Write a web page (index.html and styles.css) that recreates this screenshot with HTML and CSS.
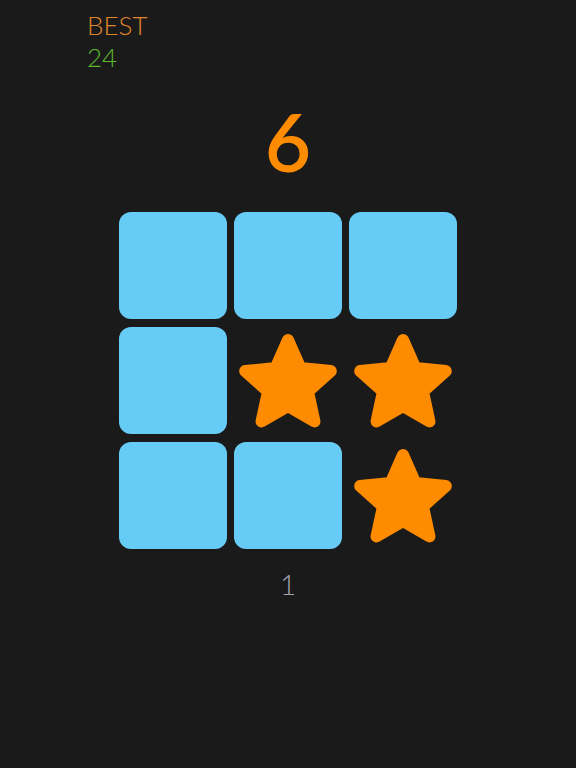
FILE: index.html
```html
<!DOCTYPE html>
<html>
<head>
<meta charset="utf-8">
<link rel="stylesheet" href="styles.css">
</head>
<body>
<div class="page">
  <div class="best">
    <div class="best-label">BEST</div>
    <div class="best-value">24</div>
  </div>
  <div class="score">6</div>
  <div class="grid">
    <div class="tile"></div>
    <div class="tile"></div>
    <div class="tile"></div>
    <div class="tile"></div>
    <div class="cell"><svg class="star" viewBox="0 0 108 107"><polygon points="54,13 66.34,41.01 96.8,44.09 73.97,64.49 80.45,94.41 54,79 27.55,94.41 34.03,64.49 11.2,44.09 41.66,41.01"/></svg></div>
    <div class="cell"><svg class="star" viewBox="0 0 108 107"><polygon points="54,13 66.34,41.01 96.8,44.09 73.97,64.49 80.45,94.41 54,79 27.55,94.41 34.03,64.49 11.2,44.09 41.66,41.01"/></svg></div>
    <div class="tile"></div>
    <div class="tile"></div>
    <div class="cell"><svg class="star" viewBox="0 0 108 107"><polygon points="54,13 66.34,41.01 96.8,44.09 73.97,64.49 80.45,94.41 54,79 27.55,94.41 34.03,64.49 11.2,44.09 41.66,41.01"/></svg></div>
  </div>
  <div class="level">1</div>
</div>
</body>
</html>
```

FILE: styles.css
```css
html, body {
  margin: 0;
  padding: 0;
  background: #1b1a1b;
}
.page {
  width: 576px;
  height: 768px;
  display: flex;
  flex-direction: column;
  font-family: "Lato", "Open Sans", sans-serif;
}
.best {
  padding: 9px 0 0 87px;
  font-weight: 300;
  font-size: 26px;
  line-height: 32px;
}
.best-label {
  color: #e0862a;
}
.best-value {
  color: #5cb82e;
}
.score {
  margin-top: 28px;
  text-align: center;
  font-size: 80px;
  line-height: 80px;
  color: #ff8c00;
  font-weight: 600;
}
.grid {
  margin-top: 31px;
  align-self: center;
  display: grid;
  grid-template-columns: repeat(3, 108px);
  grid-auto-rows: 107px;
  gap: 8px 7px;
}
.tile {
  background: #66ccf6;
  border-radius: 12px;
}
.cell {
  display: flex;
}
.star {
  width: 108px;
  height: 107px;
}
.star polygon {
  fill: #ff8c00;
  stroke: #ff8c00;
  stroke-width: 12;
  stroke-linejoin: round;
}
.level {
  margin-top: 19px;
  text-align: center;
  font-size: 28px;
  line-height: 32px;
  font-weight: 300;
  color: #a4a4b0;
}
```
